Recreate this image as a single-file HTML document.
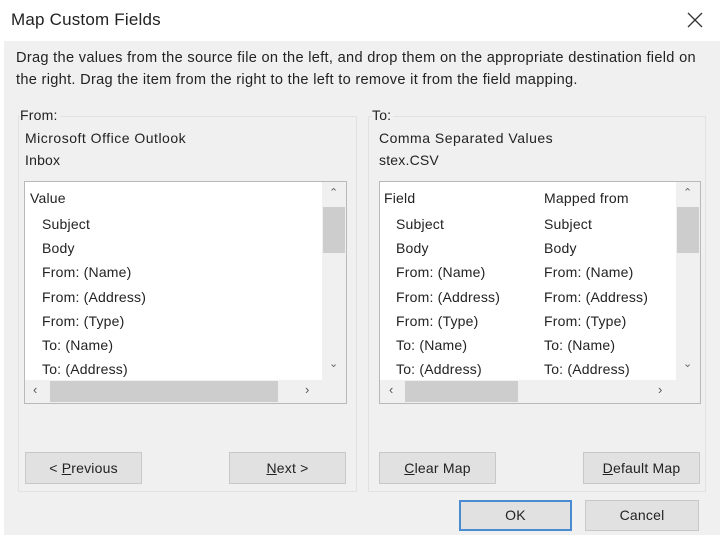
<!DOCTYPE html>
<html><head><style>
*{margin:0;padding:0;box-sizing:border-box}
body{width:720px;height:539px;background:#fff;font-family:"Liberation Sans",sans-serif;font-size:14px;letter-spacing:0.2px;color:#222;position:relative;overflow:hidden}
.a{position:absolute;white-space:nowrap}
.panel{position:absolute;left:4px;top:41px;width:716px;height:494px;background:#f0f0f0}
.grp{position:absolute;border:1px solid #e2e2e2}
.lb{position:absolute;background:#fff;border:1px solid #b9b9b9}
.btn{position:absolute;background:#e1e1e1;border:1px solid #c8c8c8;text-align:center;line-height:30px;font-size:14px}
.sb{position:absolute;background:#f0f0f0}
.th{position:absolute;background:#cdcdcd}
</style></head><body>
<div class="a" style="left:11px;top:10px;font-size:17px;color:#222">Map Custom Fields</div>
<svg class="a" style="left:687px;top:12px" width="16" height="16"><path d="M1 1L15 15M15 1L1 15" stroke="#333" stroke-width="1.3"/></svg>
<div class="panel"></div>
<div class="a" style="left:16px;top:50px;font-size:14.6px;letter-spacing:0.3px">Drag the values from the source file on the left, and drop them on the appropriate destination field on</div>
<div class="a" style="left:16px;top:72px;font-size:14.6px;letter-spacing:0.3px;height:15px;overflow:hidden">the right.  Drag the item from the right to the left to remove it from the field mapping.</div>

<div class="grp" style="left:18px;top:116px;width:339px;height:376px"></div>
<div class="a" style="left:20px;top:107px;background:#f0f0f0;padding-right:2px">From:</div>
<div class="a" style="left:25px;top:130px;letter-spacing:0.5px">Microsoft Office Outlook</div>
<div class="a" style="left:25px;top:152px">Inbox</div>
<div class="lb" style="left:24px;top:181px;width:323px;height:223px"></div>
<div class="sb" style="left:322px;top:182px;width:24px;height:198px"></div>
<div class="th" style="left:323px;top:207px;width:22px;height:46px"></div>
<div class="sb" style="left:25px;top:380px;width:321px;height:23px"></div>
<div class="th" style="left:50px;top:381px;width:228px;height:21px"></div>
<div class="a" style="left:329px;top:186px;font-size:11px;color:#666">&#8963;</div>
<div class="a" style="left:329px;top:357px;font-size:11px;color:#666">&#8964;</div>
<div class="a" style="left:33px;top:382px;font-size:13px;color:#555">&#8249;</div>
<div class="a" style="left:305px;top:382px;font-size:13px;color:#555">&#8250;</div>
<div class="a" style="left:30px;top:190px">Value</div>
<div class="a" style="left:42px;top:212px;line-height:24.2px">Subject<br>Body<br>From: (Name)<br>From: (Address)<br>From: (Type)<br>To: (Name)<br>To: (Address)</div>
<div class="btn" style="left:25px;top:452px;width:117px;height:32px">&lt; <u>P</u>revious</div>
<div class="btn" style="left:229px;top:452px;width:117px;height:32px"><u>N</u>ext &gt;</div>

<div class="grp" style="left:368px;top:116px;width:338px;height:376px"></div>
<div class="a" style="left:372px;top:107px;background:#f0f0f0;padding-right:2px">To:</div>
<div class="a" style="left:379px;top:130px;letter-spacing:0.5px">Comma Separated Values</div>
<div class="a" style="left:379px;top:152px">stex.CSV</div>
<div class="lb" style="left:379px;top:181px;width:322px;height:223px"></div>
<div class="sb" style="left:676px;top:182px;width:24px;height:198px"></div>
<div class="th" style="left:677px;top:207px;width:22px;height:46px"></div>
<div class="sb" style="left:380px;top:380px;width:320px;height:23px"></div>
<div class="th" style="left:405px;top:381px;width:113px;height:21px"></div>
<div class="a" style="left:683px;top:186px;font-size:11px;color:#666">&#8963;</div>
<div class="a" style="left:683px;top:357px;font-size:11px;color:#666">&#8964;</div>
<div class="a" style="left:389px;top:382px;font-size:13px;color:#555">&#8249;</div>
<div class="a" style="left:658px;top:382px;font-size:13px;color:#555">&#8250;</div>
<div class="a" style="left:384px;top:190px">Field</div>
<div class="a" style="left:544px;top:190px">Mapped from</div>
<div class="a" style="left:396px;top:212px;line-height:24.2px">Subject<br>Body<br>From: (Name)<br>From: (Address)<br>From: (Type)<br>To: (Name)<br>To: (Address)</div>
<div class="a" style="left:544px;top:212px;line-height:24.2px">Subject<br>Body<br>From: (Name)<br>From: (Address)<br>From: (Type)<br>To: (Name)<br>To: (Address)</div>
<div class="btn" style="left:379px;top:452px;width:117px;height:32px"><u>C</u>lear Map</div>
<div class="btn" style="left:583px;top:452px;width:117px;height:32px"><u>D</u>efault Map</div>

<div class="btn" style="left:459px;top:500px;width:113px;height:31px;border:2px solid #4a8ad0;line-height:27px">OK</div>
<div class="btn" style="left:585px;top:500px;width:114px;height:31px;line-height:29px">Cancel</div>
</body></html>
